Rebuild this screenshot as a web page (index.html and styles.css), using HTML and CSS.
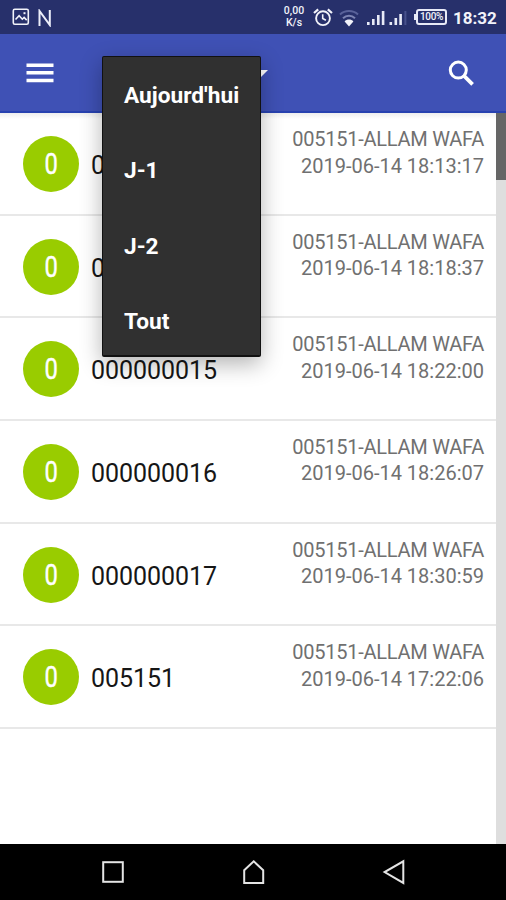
FILE: index.html
```html
<!DOCTYPE html>
<html lang="fr">
<head>
<meta charset="utf-8">
<title>Liste</title>
<link rel="stylesheet" href="styles.css">
</head>
<body>
<div class="screen">
  <header class="status">
    <svg class="st-image" width="18" height="18" viewBox="0 0 18 18" fill="none" stroke="#f2f3fa" stroke-width="1.6"><rect x="1.3" y="1.3" width="15" height="15" rx="1.5"/><path d="M3.5 11.5l3.6-3.8 3.2 3.5 1.8-1.8 2.6 2.7"/><path d="M11.5 5.2h2" stroke-width="2"/></svg>
    <svg class="st-n" width="14" height="18" viewBox="0 0 14 18" fill="none" stroke="#eceefa" stroke-width="2"><path d="M1.5 17V2L11.8 16V1"/></svg>
    <div class="st-right">
      <div class="speed"><span>0,00</span><span>K/s</span></div>
      <svg class="st-alarm" width="20" height="19" viewBox="0 0 20 19" fill="none" stroke="#f2f3fa" stroke-width="1.9"><circle cx="10" cy="10.2" r="6.9"/><path d="M1 5l4.2-3.6M19 5l-4.2-3.6" stroke-width="2.2"/><path d="M9.7 6.3v4.2l3.2 1.8" stroke-width="1.6"/></svg>
      <svg class="st-wifi" width="20" height="18" viewBox="0 0 20 18" fill="none"><path d="M1 5.4C6 .8 14 .8 19 5.4" stroke="#59629a" stroke-width="2"/><path d="M4 9.2c3.4-3.2 8.6-3.2 12 0" stroke="#7d85b4" stroke-width="2"/><path d="M5.6 12.4c2-2.6 6.8-2.6 8.8 0L10 17.4z" fill="#f2f3fa"/></svg>
      <svg class="st-signal" width="42" height="17" viewBox="0 0 42 17"><g fill="#e8eaf7"><path d="M1 12h2.6v3H1zM6 9h2.6v6H6zM11 5h2.6v10H11zM15.8 1h2.6v14h-2.6z"/><path d="M23.5 12h2.6v3h-2.6zM28.5 8h2.6v7h-2.6zM33.3 4h2.6v11h-2.6z"/></g><path d="M38.4 1h2v14h-2z" fill="#48518c"/></svg>
      <div class="battery"><span>100%</span></div>
      <div class="clock">18:32</div>
    </div>
  </header>
  <nav class="appbar">
    <svg class="burger" width="28" height="22" viewBox="0 0 28 22" fill="#fff"><path d="M.5 1.4h27v3.5H.5zM.5 9h27v3.5H.5zM.5 16.8h27v3.5H.5z"/></svg>
    <svg class="caret" width="16" height="8" viewBox="0 0 16 8" fill="#fff"><path d="M0 0h16L8 8z"/></svg>
    <svg class="search" width="27" height="27" viewBox="0 0 27 27" fill="none" stroke="#fff" stroke-width="3"><circle cx="10.3" cy="10.1" r="8"/><path d="M15.8 15.6l8.8 8.8" stroke-width="3.7"/></svg>
  </nav>
  <main class="content">
    <div class="list">
      <div class="row"><div class="badge"><span>0</span></div><div class="code">0</div><div class="meta"><span class="name">005151-ALLAM WAFA</span><span>2019-06-14 18:13:17</span></div></div>
      <div class="row"><div class="badge"><span>0</span></div><div class="code">0</div><div class="meta"><span class="name">005151-ALLAM WAFA</span><span>2019-06-14 18:18:37</span></div></div>
      <div class="row"><div class="badge"><span>0</span></div><div class="code">000000015</div><div class="meta"><span class="name">005151-ALLAM WAFA</span><span>2019-06-14 18:22:00</span></div></div>
      <div class="row"><div class="badge"><span>0</span></div><div class="code">000000016</div><div class="meta"><span class="name">005151-ALLAM WAFA</span><span>2019-06-14 18:26:07</span></div></div>
      <div class="row"><div class="badge"><span>0</span></div><div class="code">000000017</div><div class="meta"><span class="name">005151-ALLAM WAFA</span><span>2019-06-14 18:30:59</span></div></div>
      <div class="row"><div class="badge"><span>0</span></div><div class="code">005151</div><div class="meta"><span class="name">005151-ALLAM WAFA</span><span>2019-06-14 17:22:06</span></div></div>
    </div>
    <div class="track"><div class="thumb"></div></div>
  </main>
  <footer class="navbar">
    <svg width="24" height="26" viewBox="0 0 24 26" fill="none" stroke="#e4e4e4" stroke-width="2"><rect x="2.2" y="3.2" width="19.6" height="19.6"/></svg>
    <svg width="24" height="26" viewBox="0 0 24 26" fill="none" stroke="#e4e4e4" stroke-width="2"><path d="M2.2 24V11.3L11.7 2.3l9.5 9V24z"/></svg>
    <svg width="24" height="26" viewBox="0 0 24 26" fill="none" stroke="#e4e4e4" stroke-width="2"><path d="M21.3 2.3v21.6L2.6 13.1z"/></svg>
  </footer>
  <div class="menu">
    <div class="item">Aujourd'hui</div>
    <div class="item">J-1</div>
    <div class="item">J-2</div>
    <div class="item">Tout</div>
  </div>
</div>
</body>
</html>
```
FILE: styles.css
```css
* { box-sizing: border-box; }
body { margin: 0; font-family: Roboto, "Liberation Sans", sans-serif; }
.screen { position: relative; width: 506px; height: 900px; display: flex; flex-direction: column; overflow: hidden; background: #fff; }
svg { display: block; flex: none; }

.status { height: 34px; flex: none; display: flex; align-items: center; padding: 0 10px 0 12px; background: #27306b; }
.st-n { margin-left: 8px; margin-top: 2px; }
.st-right { margin-left: auto; display: flex; align-items: center; color: #f2f3fa; }
.speed { width: 22px; display: flex; flex-direction: column; align-items: center; font-size: 10.5px; line-height: 12px; font-weight: 500; }
.st-alarm { margin-left: 8px; }
.st-wifi { margin-left: 6px; margin-top: 2px; }
.st-signal { margin-left: 7px; margin-top: 3px; }
.battery { position: relative; width: 31px; height: 16px; margin-left: 8px; border: 2px solid #e8eaf7; border-radius: 3px; display: flex; align-items: center; justify-content: center; font-size: 10px; line-height: 12px; letter-spacing: -0.3px; font-weight: 500; }
.battery::before { content: ""; position: absolute; left: -4px; top: 3px; width: 2px; height: 6px; background: #e8eaf7; }
.clock { margin-left: 6px; width: 43px; font-size: 17px; font-weight: 700; line-height: 20px; margin-top: 2px; white-space: nowrap; }

.appbar { height: 79px; flex: none; display: flex; align-items: center; padding: 0 31px 0 26px; background: #3f51b5; border-bottom: 2px solid #2842b0; }
.caret { margin-left: 198px; margin-top: 3px; }
.search { margin-left: auto; margin-top: 2px; }

.content { flex: 1; min-height: 0; display: flex; background: linear-gradient(#eee, #fff 6px); }
.list { flex: 1; }
.row { height: 102.65px; display: flex; align-items: flex-start; padding: 0 12px 0 23px; border-bottom: 2px solid #e8e8e8; }
.badge { width: 56px; height: 56px; margin-top: 23px; border-radius: 50%; background: #99cc00; color: #fff; display: flex; align-items: center; justify-content: center; font-size: 29px; line-height: 56px; }
.badge span { transform: scaleX(.82); -webkit-text-stroke: 0.4px #fff; }
.code { margin: 38px 0 0 12px; font-size: 25px; line-height: 30px; letter-spacing: -0.06px; color: #161616; }
.meta { margin: 13px 0 0 auto; display: flex; flex-direction: column; align-items: flex-end; font-size: 20px; line-height: 26.5px; color: #707070; white-space: nowrap; }
.name { letter-spacing: -0.25px; }
.track { width: 10px; background: #dedede; }
.thumb { height: 67px; background: #666; }

.navbar { height: 56px; flex: none; display: flex; align-items: center; justify-content: space-between; padding: 0 100px 0 101px; background: #000; }

.menu { position: absolute; left: 102px; top: 56px; width: 159px; height: 301px; padding: 1px 0 0; background: #303030; border: 1px solid #111; border-bottom-width: 2px; border-radius: 2px; box-shadow: 0 7px 22px rgba(0,0,0,.3); color: #fff; }
.item { height: 75.3px; padding-left: 21px; font-size: 22.7px; line-height: 75px; font-weight: 700; white-space: nowrap; }
```
